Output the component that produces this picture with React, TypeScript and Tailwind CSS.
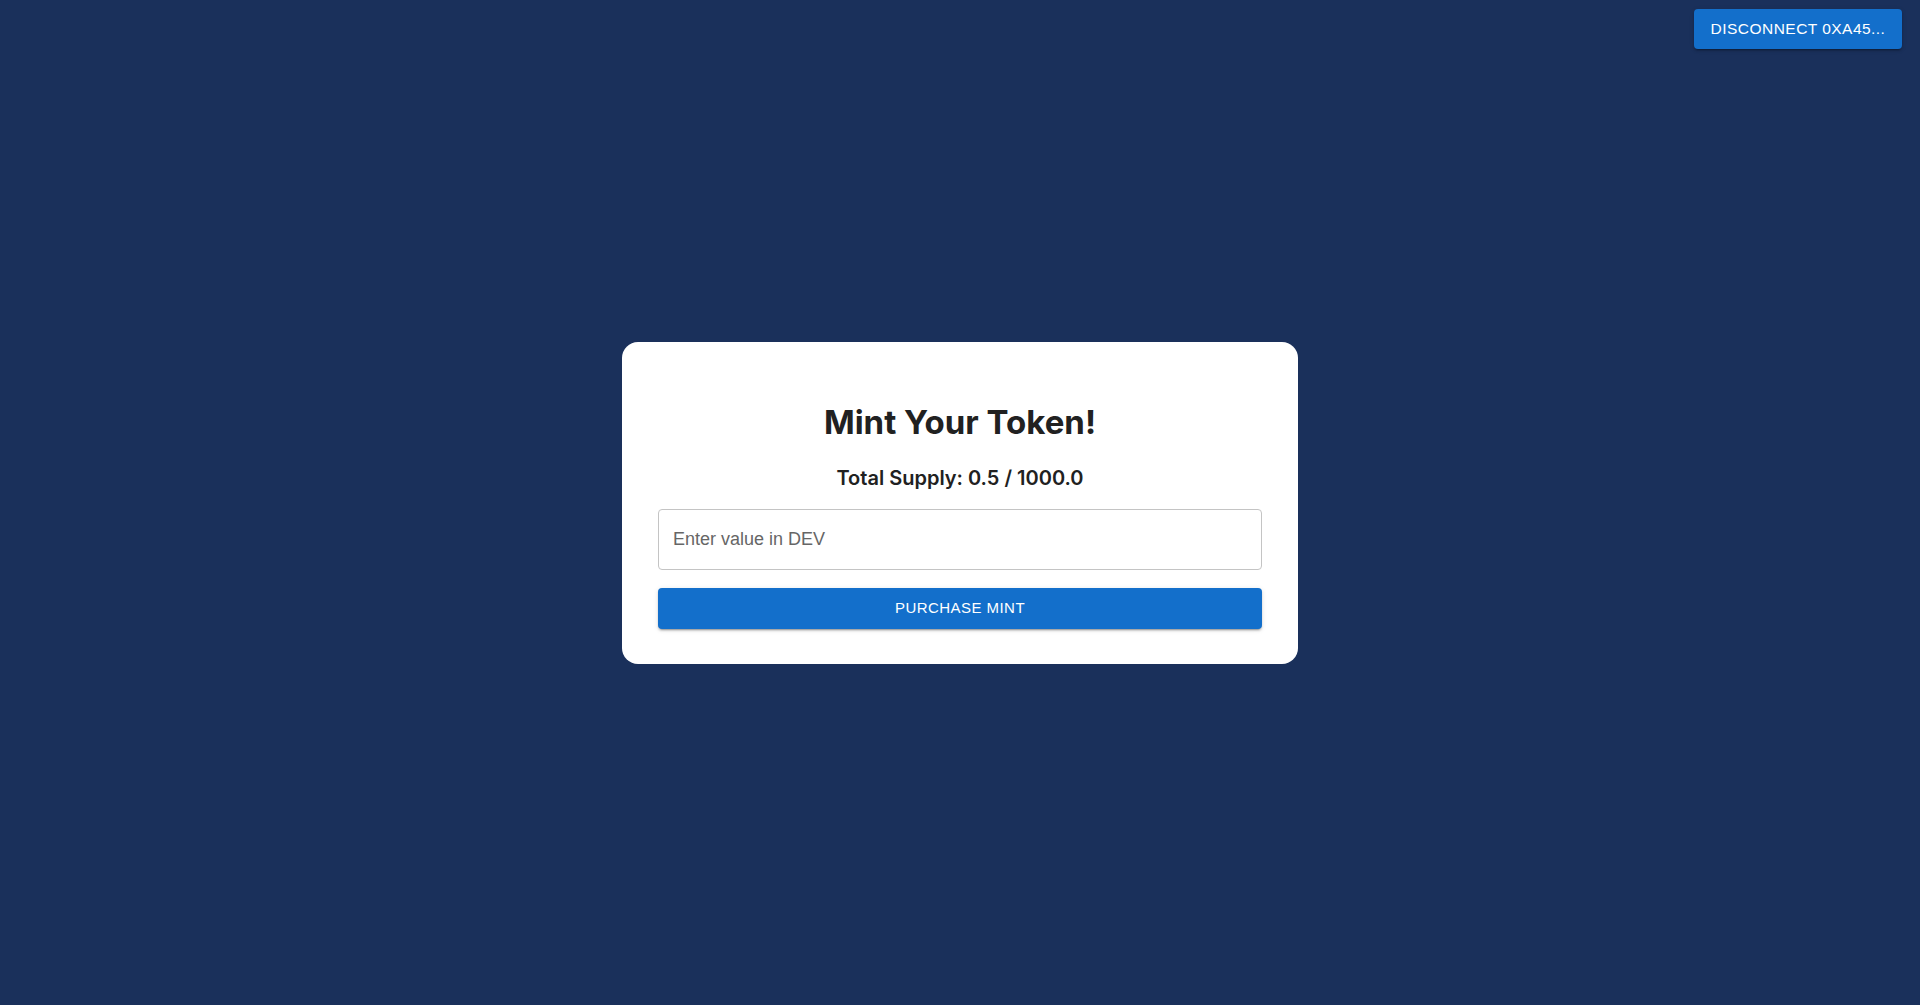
import { useState } from 'react';

export default function App() {
  const [value, setValue] = useState('');

  return (
    <div className="relative min-h-screen w-full bg-[#1a305b] flex items-center justify-center font-['Liberation_Sans',Arial,sans-serif]">
      {/* Wallet */}
      <button className="absolute top-[9px] right-[18px] h-[40px] w-[208px] rounded-[4px] bg-[#136fcb] text-white text-[15.5px] leading-[36px] tracking-[0.03em] uppercase shadow-[0_3px_1px_-2px_rgba(0,0,0,0.2),0_2px_2px_0_rgba(0,0,0,0.14),0_1px_5px_0_rgba(0,0,0,0.12)]">
        Disconnect 0xA45...
      </button>

      {/* Mint card */}
      <div className="w-[676px] bg-white rounded-2xl px-[36px] pt-[60px] pb-[35px] flex flex-col">
        <h1 className="text-center font-['Inter',sans-serif] font-bold text-[33px] leading-[41px] text-[#212121]">
          Mint Your Token!
        </h1>
        <p className="mt-[21px] text-center font-['Inter',sans-serif] font-semibold text-[20px] leading-[28px] text-[#212121]">
          Total Supply: 0.5 / 1000.0
        </p>
        <input
          value={value}
          onChange={(e) => setValue(e.target.value)}
          placeholder="Enter value in DEV"
          className="mt-[17px] h-[61px] w-full rounded-[4px] border border-[#c4c4c4] px-[14px] text-[18px] text-[#212121] placeholder:text-[#666666] outline-none"
        />
        <button className="mt-[18px] h-[41px] w-full rounded-[4px] bg-[#136fcb] text-white text-[15px] tracking-[0.03em] uppercase shadow-[0_3px_1px_-2px_rgba(0,0,0,0.2),0_2px_2px_0_rgba(0,0,0,0.14),0_1px_5px_0_rgba(0,0,0,0.12)]">
          Purchase Mint
        </button>
      </div>
    </div>
  );
}
